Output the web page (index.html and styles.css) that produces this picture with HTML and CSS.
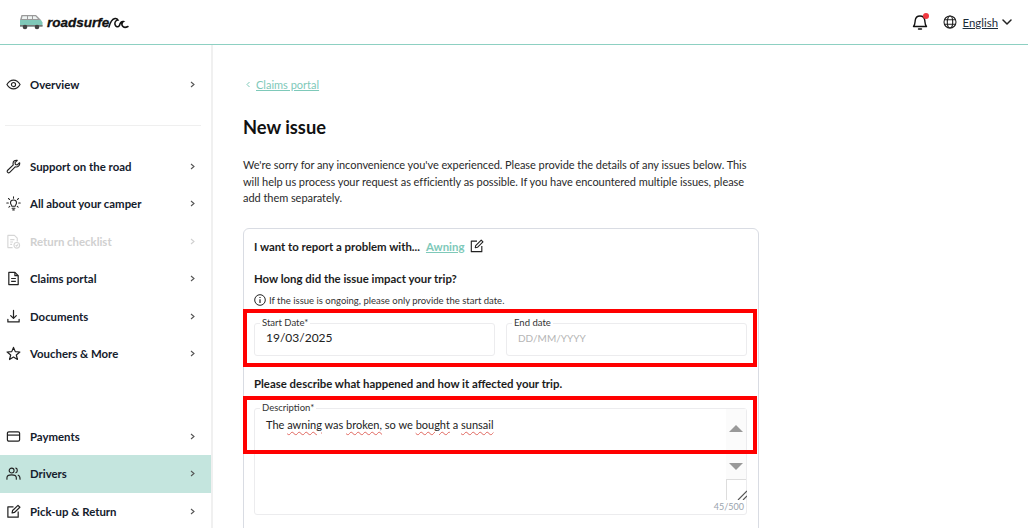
FILE: index.html
```html
<!DOCTYPE html>
<html lang="en">
<head>
  <meta charset="UTF-8">
  <title>New issue</title>
  <link rel="stylesheet" href="styles.css">
</head>
<body>

  <header class="topbar">
    <div class="logo">
      <svg width="24" height="16" viewBox="0 0 24 16">
        <path d="M1 6 H22 L23.500 8.500 V12.500 H1 Z" fill="#7fc8b8"/>
        <path d="M1 6 L2.500 1 H17 L22 6 Z" fill="#9a9a9a"/>
        <path d="M3.500 2.300 H8 V5 H2.800 Z M9 2.300 H13 V5 H9 Z M14 2.300 H16.500 L19 5 H14 Z" fill="#eef3f2"/>
        <rect x="1" y="11" width="22.500" height="1.600" fill="#777"/>
        <circle cx="6" cy="13" r="2.300" fill="#444"/>
        <circle cx="18" cy="13" r="2.300" fill="#444"/>
      </svg>
      <span class="logo-text">roadsurfe</span>
      <svg class="logo-wave" width="21" height="12" viewBox="0 0 21 12">
        <path d="M1 10 C2 6 4 2 7 1.500 C8.500 1.300 9.500 2 10 3 C8 3 6.500 5 7 7.500 C7.500 10 10 10.500 11.500 8.500 C12 6 13.500 4 15.500 4.500 C14 5.500 13.500 7.500 14.500 9 C15.500 10.500 18 10.500 20 9.500" fill="none" stroke="#111" stroke-width="1.500" stroke-linecap="round"/>
      </svg>
    </div>
    <div class="top-actions">
      <span class="bell">
        <svg width="18" height="18" viewBox="0 0 18 18" fill="none" stroke="#111" stroke-width="1.400" stroke-linejoin="round">
          <path d="M2.500 13.500 C4 12 4 10 4.200 7.500 C4.500 4.500 6.500 3 9 3 C11.500 3 13.500 4.500 13.800 7.500 C14 10 14 12 15.500 13.500 Z"/>
          <path d="M7.500 16 H10.500" stroke-linecap="round"/>
        </svg>
        <span class="bell-dot"></span>
      </span>
      <svg width="14" height="14" viewBox="0 0 14 14" fill="none" stroke="#222" stroke-width="1.100">
        <circle cx="7" cy="7" r="6"/>
        <ellipse cx="7" cy="7" rx="2.700" ry="6"/>
        <path d="M1.500 4.800 H12.500 M1.500 9.200 H12.500"/>
      </svg>
      <a class="lang">English</a>
      <svg class="lang-caret" width="10" height="6" viewBox="0 0 10 6" fill="none" stroke="#222" stroke-width="1.500" stroke-linecap="round" stroke-linejoin="round">
        <path d="M1 1 L5 5 L9 1"/>
      </svg>
    </div>
  </header>

  <div class="layout">
    <nav class="sidebar">
      <div class="nav-group">
        <a class="nav-item">
          <svg class="nav-icon" viewBox="0 0 16 16" fill="none" stroke="#222" stroke-width="1.200"><path d="M1 8 C3 4.500 5.500 3.300 8 3.300 C10.500 3.300 13 4.500 15 8 C13 11.500 10.500 12.700 8 12.700 C5.500 12.700 3 11.500 1 8 Z"/><circle cx="8" cy="8" r="2.200"/></svg>
          <span class="nav-label">Overview</span><span class="nav-arrow"><svg width="5" height="7" viewBox="0 0 5 7" fill="none" stroke="currentColor" stroke-width="1.100"><path d="M1 1 L4 3.500 L1 6"/></svg></span>
        </a>
      </div>
      <div class="nav-group">
        <a class="nav-item">
          <svg class="nav-icon" viewBox="0 0 16 16" fill="none" stroke="#222" stroke-width="1.200" stroke-linejoin="round"><path d="M14.500 4 L12 6.300 L10 5.800 L9.600 3.800 L12 1.500 C9.800 .8 7.500 2.300 7.500 4.700 C7.500 5.300 7.600 5.800 7.800 6.300 L1.800 12 C1 12.800 1.200 13.800 1.800 14.300 C2.400 14.900 3.300 14.900 4 14.200 L9.800 8.300 C12.300 9.200 15.200 7 14.500 4 Z"/></svg>
          <span class="nav-label">Support on the road</span><span class="nav-arrow"><svg width="5" height="7" viewBox="0 0 5 7" fill="none" stroke="currentColor" stroke-width="1.100"><path d="M1 1 L4 3.500 L1 6"/></svg></span>
        </a>
        <a class="nav-item">
          <svg class="nav-icon" viewBox="0 0 16 16" fill="none" stroke="#222" stroke-width="1.100" stroke-linecap="round"><path d="M6.300 11 C6 9.500 4.800 9 4.800 7.200 C4.800 5.400 6.200 4.200 8 4.200 C9.800 4.200 11.200 5.400 11.200 7.200 C11.200 9 10 9.500 9.700 11 Z"/><path d="M6.500 13 H9.500 M7.200 14.800 H8.800 M8 .8 V2.500 M2.600 2.600 L3.800 3.800 M13.400 2.600 L12.200 3.800 M.8 7.500 H2.500 M13.500 7.500 H15.200 M3 12 L4 11 M13 12 L12 11"/></svg>
          <span class="nav-label">All about your camper</span><span class="nav-arrow"><svg width="5" height="7" viewBox="0 0 5 7" fill="none" stroke="currentColor" stroke-width="1.100"><path d="M1 1 L4 3.500 L1 6"/></svg></span>
        </a>
        <a class="nav-item is-disabled">
          <svg class="nav-icon" viewBox="0 0 16 16" fill="none" stroke="#d6d6d6" stroke-width="1.200" stroke-linejoin="round"><path d="M7 14.500 H2 V1.500 H9 L12 4.500 V8"/><path d="M4.500 6 H9 M4.500 8.500 H7.500 M4.500 11 H6.500"/><circle cx="11.500" cy="12" r="3"/><path d="M10.300 12 L11.200 12.900 L12.800 11.200"/></svg>
          <span class="nav-label">Return checklist</span><span class="nav-arrow"><svg width="5" height="7" viewBox="0 0 5 7" fill="none" stroke="currentColor" stroke-width="1.100"><path d="M1 1 L4 3.500 L1 6"/></svg></span>
        </a>
        <a class="nav-item">
          <svg class="nav-icon" viewBox="0 0 16 16" fill="none" stroke="#222" stroke-width="1.300" stroke-linejoin="round"><path d="M3 1.500 H9.500 L13 5 V14.500 H3 Z"/><path d="M9.500 1.500 V5 H13 M5.500 8 H10.500 M5.500 11 H10.500"/></svg>
          <span class="nav-label">Claims portal</span><span class="nav-arrow"><svg width="5" height="7" viewBox="0 0 5 7" fill="none" stroke="currentColor" stroke-width="1.100"><path d="M1 1 L4 3.500 L1 6"/></svg></span>
        </a>
        <a class="nav-item">
          <svg class="nav-icon" viewBox="0 0 16 16" fill="none" stroke="#222" stroke-width="1.300" stroke-linecap="round" stroke-linejoin="round"><path d="M8 1.500 V9.500 M5 7 L8 10 L11 7"/><path d="M2 11 V13.800 H14 V11"/></svg>
          <span class="nav-label">Documents</span><span class="nav-arrow"><svg width="5" height="7" viewBox="0 0 5 7" fill="none" stroke="currentColor" stroke-width="1.100"><path d="M1 1 L4 3.500 L1 6"/></svg></span>
        </a>
        <a class="nav-item">
          <svg class="nav-icon" viewBox="0 0 16 16" fill="none" stroke="#222" stroke-width="1.300" stroke-linejoin="round"><path d="M8 1.500 L9.900 6 L14.800 6.400 L11 9.600 L12.200 14.400 L8 11.800 L3.800 14.400 L5 9.600 L1.200 6.400 L6.100 6 Z"/></svg>
          <span class="nav-label">Vouchers &amp; More</span><span class="nav-arrow"><svg width="5" height="7" viewBox="0 0 5 7" fill="none" stroke="currentColor" stroke-width="1.100"><path d="M1 1 L4 3.500 L1 6"/></svg></span>
        </a>
      </div>
      <div class="nav-group">
        <a class="nav-item">
          <svg class="nav-icon" viewBox="0 0 16 16" fill="none" stroke="#222" stroke-width="1.300"><rect x="1.500" y="3" width="13" height="10" rx="1.500"/><path d="M1.500 6.500 H14.500"/></svg>
          <span class="nav-label">Payments</span><span class="nav-arrow"><svg width="5" height="7" viewBox="0 0 5 7" fill="none" stroke="currentColor" stroke-width="1.100"><path d="M1 1 L4 3.500 L1 6"/></svg></span>
        </a>
        <a class="nav-item is-active">
          <svg class="nav-icon" viewBox="0 0 16 16" fill="none" stroke="#222" stroke-width="1.200" stroke-linecap="round"><circle cx="6" cy="4.800" r="2.600"/><path d="M1 14 V12.500 C1 10.500 3 9.500 6 9.500 C9 9.500 11 10.500 11 12.500 V14"/><path d="M10.500 2.300 C12.300 2.500 12.800 6.500 10.500 7.200 M13 9.800 C14.500 10.300 15 11.500 15 14"/></svg>
          <span class="nav-label">Drivers</span><span class="nav-arrow"><svg width="5" height="7" viewBox="0 0 5 7" fill="none" stroke="currentColor" stroke-width="1.100"><path d="M1 1 L4 3.500 L1 6"/></svg></span>
        </a>
        <a class="nav-item">
          <svg class="nav-icon" viewBox="0 0 16 16" fill="none" stroke="#222" stroke-width="1.300" stroke-linejoin="round"><path d="M8 3 H2 V14 H13 V8"/><path d="M6.500 9.500 L7 7 L12.800 1.500 L14.800 3.500 L9 9 Z"/></svg>
          <span class="nav-label">Pick-up &amp; Return</span><span class="nav-arrow"><svg width="5" height="7" viewBox="0 0 5 7" fill="none" stroke="currentColor" stroke-width="1.100"><path d="M1 1 L4 3.500 L1 6"/></svg></span>
        </a>
      </div>
    </nav>

    <main class="content">
      <div class="breadcrumb">
        <svg width="4" height="7" viewBox="0 0 4 7" fill="none" stroke="#7ec9b9" stroke-width="1"><path d="M3.500 1 L1 3.500 L3.500 6"/></svg>
        <a class="teal-link">Claims portal</a>
      </div>
      <h1 class="page-title">New issue</h1>
      <p class="intro">We're sorry for any inconvenience you've experienced. Please provide the details of any issues below. This will help us process your request as efficiently as possible. If you have encountered multiple issues, please add them separately.</p>

      <section class="card">
        <div class="problem-row">
          <strong>I want to report a problem with...</strong>
          <a class="teal-link problem-link">Awning</a>
          <svg width="14" height="14" viewBox="0 0 16 16" fill="none" stroke="#222" stroke-width="1.300" stroke-linejoin="round"><path d="M8 2.500 H1.500 V14.500 H13.500 V8"/><path d="M6 10 L6.500 7.500 L12.800 1.300 L14.800 3.300 L8.500 9.500 Z"/></svg>
        </div>

        <h2 class="question">How long did the issue impact your trip?</h2>
        <p class="hint">
          <svg width="12" height="12" viewBox="0 0 12 12" fill="none" stroke="#222" stroke-width="1"><circle cx="6" cy="6" r="5.300"/><path d="M6 5.200 V9 M6 3 V4.100" stroke-width="1.200"/></svg>
          If the issue is ongoing, please only provide the start date.
        </p>

        <div class="date-row">
          <div class="field">
            <span class="field-label">Start Date*</span>
            <span class="field-value date-value">19/03/2025</span>
          </div>
          <div class="field">
            <span class="field-label">End date</span>
            <span class="field-value is-placeholder">DD/MM/YYYY</span>
          </div>
        </div>

        <h2 class="question describe">Please describe what happened and how it affected your trip.</h2>

        <div class="field field-area">
          <span class="field-label">Description*</span>
          <span class="field-value">The <u class="spell">awning</u> was <u class="spell">broken,</u> so we <u class="spell">bought</u> a <u class="spell">sunsail</u></span>
          <div class="scroller">
            <span class="tri-up"></span>
            <span class="tri-down"></span>
            <span class="resizer">
              <svg width="12" height="12" viewBox="0 0 12 12" fill="none" stroke="#555" stroke-width="1.200"><path d="M3 12 L12 3 M8 12 L12 8"/></svg>
            </span>
          </div>
          <span class="counter">45/500</span>
        </div>
      </section>
    </main>
  </div>

  <div class="mark mark-dates"></div>
  <div class="mark mark-desc"></div>

</body>
</html>
```

FILE: styles.css
```css
* {
  box-sizing: border-box;
}
html, body {
  height: 100%;
}
body {
  margin: 0;
  height: 528px;
  overflow: hidden;
  background: #fff;
  color: #1c1c1c;
  font-family: Lato, Arial, sans-serif;
  font-size: 11px;
}
svg {
  display: block;
  flex: none;
}
.topbar {
  height: 45px;
  padding: 0 16px 0 19px;
  display: flex;
  align-items: center;
  justify-content: space-between;
  border-bottom: 1px solid #8dd0c2;
}
.logo {
  display: flex;
  align-items: center;
  gap: 4px;
}
.logo-text {
  font-family: "Liberation Sans", Arial, sans-serif;
  font-style: italic;
  font-weight: 700;
  font-size: 13.500px;
  -webkit-text-stroke: .3px #111;
  color: #111;
  margin-top: 1px;
}
.logo-wave {
  margin-left: -5px;
  margin-top: 2px;
}
.top-actions {
  display: flex;
  align-items: center;
  gap: 6px;
}
.bell {
  position: relative;
  margin-right: 8px;
}
.bell-dot {
  position: absolute;
  top: 0;
  right: 0;
  width: 6px;
  height: 6px;
  border-radius: 50%;
  background: #f0383f;
}
.lang {
  font-size: 11.400px;
  color: #1c2c3a;
  text-decoration: underline;
}
.lang-caret {
  margin-left: -2px;
}
.layout {
  display: flex;
}
.sidebar {
  width: 213px;
  height: 483px;
  flex: none;
  padding-top: 21px;
  border-right: 2px solid #f0f0f0;
}
.nav-group {
  padding-bottom: 22px;
  margin-bottom: 22px;
}
.nav-group:first-child {
  position: relative;
}
.nav-group + .nav-group {
  padding-bottom: 0;
  margin-bottom: 45px;
}
.nav-group:first-child::after {
  content: "";
  position: absolute;
  left: 5px;
  right: 10px;
  bottom: 0;
  border-bottom: 1px solid #efefef;
}
.nav-item {
  height: 37.500px;
  padding: 0 16px 0 6px;
  display: flex;
  align-items: center;
  color: #14202c;
}
.nav-icon {
  width: 15px;
  height: 15px;
  margin-right: 9px;
}
.nav-label {
  flex: 1;
  font-weight: 700;
  font-size: 11.400px;
}
.nav-arrow {
  color: #555;
}
.is-active {
  background: #c4e5de;
}
.is-disabled {
  color: #d0d0d0;
}
.is-disabled .nav-arrow {
  color: #d0d0d0;
}
.content {
  flex: 1;
  padding: 32px 0 0 30px;
}
.breadcrumb {
  display: flex;
  align-items: center;
  gap: 6px;
  margin-left: 3px;
  height: 14px;
}
.teal-link {
  color: #7ec9b9;
  text-decoration: underline;
  font-size: 11px;
}
.page-title {
  margin: 23px 0 0;
  font-size: 18.300px;
  line-height: 26px;
  font-weight: 700;
  color: #111;
}
.intro {
  width: 505px;
  margin: 17px 0 0;
  font-size: 11px;
  letter-spacing: -.05px;
  line-height: 16.500px;
  color: #2a2a2a;
}
.card {
  width: 516px;
  height: 320px;
  margin-top: 21px;
  padding: 9px 11px 9px 10px;
  border: 1px solid #d9dce3;
  border-radius: 6px;
}
.problem-row {
  display: flex;
  align-items: center;
  gap: 6px;
  height: 17px;
  font-size: 11.400px;
}
.problem-row strong {
  font-weight: 700;
}
.problem-link {
  font-size: 11.400px;
  font-weight: 700;
}
.question {
  margin: 16px 0 0;
  font-size: 11.400px;
  line-height: 16px;
  font-weight: 700;
}
.hint {
  display: flex;
  align-items: center;
  gap: 3px;
  margin: 7px 0 0;
  font-size: 9.500px;
  line-height: 13px;
  color: #333;
}
.date-row {
  display: flex;
  gap: 11px;
  margin-top: 16px;
}
.field {
  position: relative;
  flex: 1;
  height: 33px;
  padding: 6px 11px;
  border: 1px solid #ececee;
  border-radius: 3px;
}
.field-label {
  position: absolute;
  top: -7px;
  left: 5px;
  padding: 0 2px;
  background: #fff;
  font-size: 9.500px;
  line-height: 12px;
  color: #333;
}
.field-value {
  font-size: 11px;
  line-height: 16px;
  color: #222;
}
.date-value {
  font-size: 12px;
}
.is-placeholder {
  font-size: 10px;
  color: #b5b5b5;
}
.describe {
  margin-top: 20px;
}
.field-area {
  flex: none;
  height: 107px;
  margin-top: 16px;
  padding: 8px 11px;
}
.spell {
  text-decoration: underline wavy #e0665e;
  text-decoration-thickness: 1px;
  text-underline-offset: 2px;
}
.scroller {
  position: absolute;
  top: 0;
  right: 0;
  width: 20px;
  height: 90px;
  background: #fbfbfb;
}
.tri-up, .tri-down {
  position: absolute;
  left: 3px;
  width: 0;
  height: 0;
  border-left: 7px solid transparent;
  border-right: 7px solid transparent;
}
.tri-up {
  top: 16px;
  border-bottom: 7px solid #999;
}
.tri-down {
  top: 54px;
  border-top: 7px solid #999;
}
.resizer {
  position: absolute;
  left: 0;
  bottom: -1px;
  width: 20px;
  height: 21px;
  padding: 8px 0 0 8px;
  background: #fff;
  border: 1px solid #ddd;
  border-width: 1px 0 0 1px;
}
.counter {
  position: absolute;
  right: 2px;
  bottom: 1px;
  font-size: 9px;
  line-height: 12px;
  color: #9aa3ad;
}
.mark {
  position: absolute;
  left: 243px;
  width: 514px;
  height: 58px;
  border: 4px solid #f00;
}
.mark-dates {
  top: 309px;
}
.mark-desc {
  top: 396px;
}
```
